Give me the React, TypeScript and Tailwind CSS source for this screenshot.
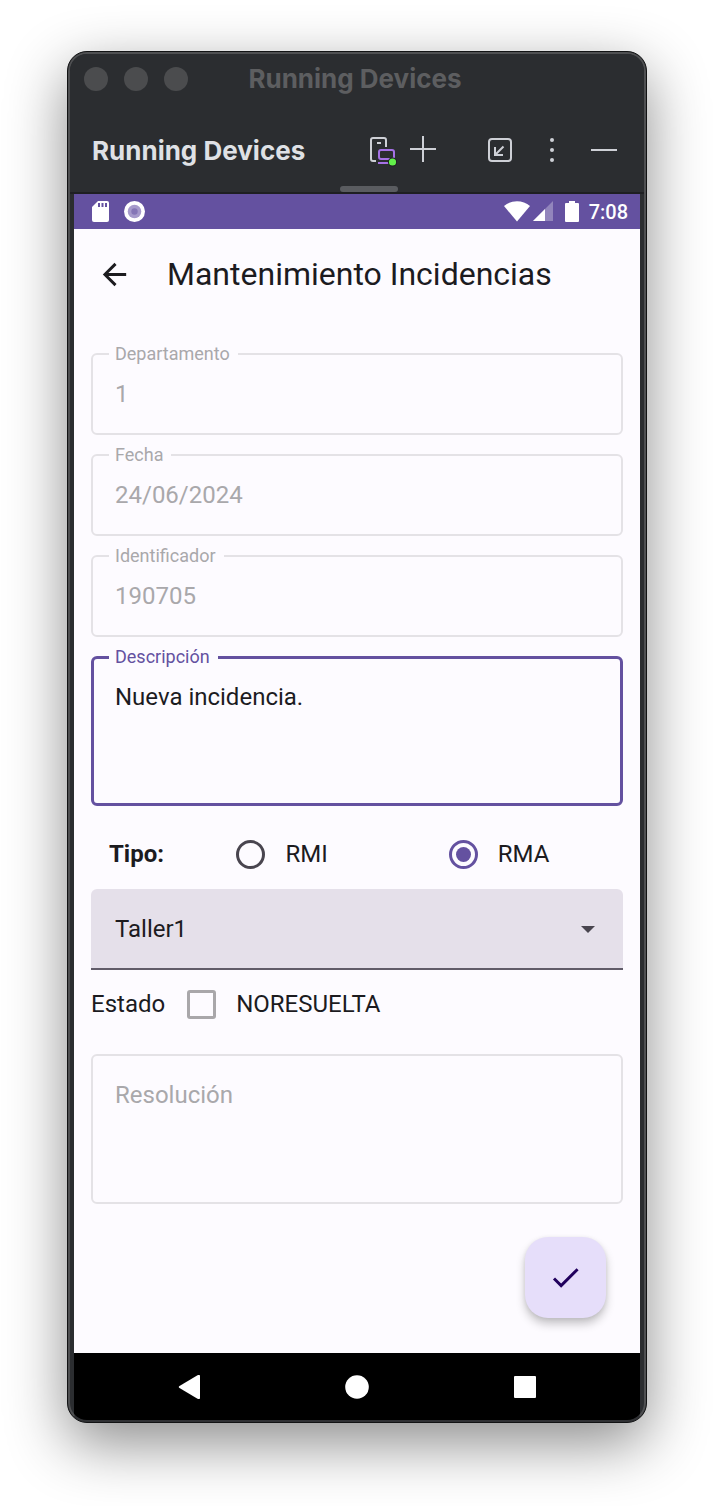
import { useState } from 'react';
import type { ReactNode } from 'react';

const FIELD_TEXT = 'block w-full resize-none bg-transparent px-1.5 text-[24px] leading-8 outline-none';

function ToolButton({ label, children }: { label: string; children: ReactNode }) {
  return (
    <button type="button" aria-label={label} className="flex shrink-0 items-center justify-center text-[#ced0d6]">
      {children}
    </button>
  );
}

function WindowHeader() {
  return (
    <header className="border-b-2 border-[#1e1f22] bg-[#2b2d30] font-['Inter',sans-serif] text-[26px] leading-8 font-bold">
      <div className="grid grid-cols-[1fr_auto_1fr] items-center py-[9px] pr-[18px] pl-3.5">
        <div className="flex gap-4">
          <span className="size-6 rounded-full bg-[#4b4c4e]" />
          <span className="size-6 rounded-full bg-[#4b4c4e]" />
          <span className="size-6 rounded-full bg-[#4b4c4e]" />
        </div>
        <span className="whitespace-nowrap text-[#5d5e60]">Running Devices</span>
      </div>
      <div className="flex items-center pt-[31px] pr-[27px] pb-[19px] pl-[22px]">
        <h1 className="grow whitespace-nowrap text-[#dfe1e5]">Running Devices</h1>
        <div className="flex items-center">
          <div className="flex items-center gap-[13px] pr-[51px]">
            <ToolButton label="Device mirroring">
              <svg width="28" height="32" viewBox="0 0 28 32" fill="none" strokeWidth="2">
                <path d="M7 26H4a2 2 0 0 1-2-2V5a2 2 0 0 1 2-2h11a2 2 0 0 1 2 2v7" stroke="currentColor" />
                <path d="M8 8h4" stroke="currentColor" />
                <rect x="10" y="15" width="15" height="9" rx="2" stroke="#a571e6" />
                <path d="M9 28h11" stroke="#a571e6" />
                <circle cx="23.500" cy="27" r="4.600" fill="#1e1f22" />
                <circle cx="23.500" cy="27" r="3.600" fill="#62f04a" />
              </svg>
            </ToolButton>
            <ToolButton label="Add device">
              <svg width="26" height="32" viewBox="0 0 26 32" fill="none" stroke="currentColor" strokeWidth="2">
                <path d="M0 14h26M13 1v26" />
              </svg>
            </ToolButton>
          </div>
          <div className="flex items-center gap-[35px]">
            <ToolButton label="Dock window">
              <svg width="26" height="32" viewBox="0 0 26 32" fill="none" stroke="currentColor" strokeWidth="2">
                <rect x="2" y="4" width="22" height="22" rx="3" />
                <path d="M16.500 11.500 8.500 19.500M8 12v8h8" />
              </svg>
            </ToolButton>
            <ToolButton label="More options">
              <svg width="8" height="32" viewBox="0 0 8 32" fill="currentColor">
                <circle cx="4" cy="5" r="2" />
                <circle cx="4" cy="15" r="2" />
                <circle cx="4" cy="25" r="2" />
              </svg>
            </ToolButton>
            <ToolButton label="Hide">
              <svg width="26" height="32" viewBox="0 0 26 32" fill="none" stroke="currentColor" strokeWidth="2">
                <path d="M0 15h26" />
              </svg>
            </ToolButton>
          </div>
        </div>
      </div>
      <div className="flex justify-center pl-6">
        <span className="h-1.5 w-[58px] rounded-full bg-[#5a5c60]" />
      </div>
    </header>
  );
}

function StatusBar() {
  return (
    <div className="flex h-[35px] items-center justify-between bg-[#6451a0] pr-3 pl-[18px] text-white">
      <div className="flex items-center gap-[15px]">
        <svg width="17" height="21" viewBox="0 0 17 21">
          <path d="M6 0h9a2 2 0 0 1 2 2v17a2 2 0 0 1-2 2H2a2 2 0 0 1-2-2V6z" fill="currentColor" />
          <path d="M7 2v4M10.500 2v4M14 2v4" stroke="#6451a0" strokeWidth="2" />
        </svg>
        <svg width="21" height="21" viewBox="0 0 21 21">
          <circle cx="10.500" cy="10.500" r="10.500" fill="currentColor" />
          <circle cx="10.500" cy="10.500" r="6.800" fill="#a69acb" />
          <circle cx="10.500" cy="10.500" r="3.200" fill="#8576b6" />
        </svg>
      </div>
      <div className="flex items-center">
        <svg width="26" height="21" viewBox="0 0 26 21" fill="currentColor">
          <path d="M13 20.500 0 5C7-1.300 19-1.300 26 5z" />
        </svg>
        <svg className="ml-[3px]" width="20" height="21" viewBox="0 0 20 21" fill="currentColor">
          <path d="M20 0v20H0z" opacity=".3" />
          <path d="M12 8v12H0z" />
        </svg>
        <svg className="ml-3" width="14" height="21" viewBox="0 0 14 21" fill="currentColor">
          <path d="M4 0h6v2h3a1 1 0 0 1 1 1v17a1 1 0 0 1-1 1H1a1 1 0 0 1-1-1V3a1 1 0 0 1 1-1h3z" />
        </svg>
        <span className="ml-2.5 text-[20px] leading-6 font-medium">7:08</span>
      </div>
    </div>
  );
}

function DisabledField({ id, label, value }: { id: string; label: string; value: string }) {
  return (
    <fieldset className="min-w-0 rounded-md border-2 border-[#e4e2e6] px-4 pt-3.5 pb-[23px] text-[#a9a8ab]">
      <legend className="pr-2 pl-1.5 text-[18px] leading-5">
        <label htmlFor={id}>{label}</label>
      </legend>
      <input id={id} disabled defaultValue={value} className={FIELD_TEXT} />
    </fieldset>
  );
}

function RadioOption({ label, checked, onSelect }: { label: string; checked: boolean; onSelect: () => void }) {
  return (
    <label className="flex items-center gap-5">
      <input
        type="radio"
        name="tipo"
        checked={checked}
        onChange={onSelect}
        className="grid size-[29px] appearance-none place-items-center rounded-full border-3 border-[#49454f] before:size-[15px] before:rounded-full checked:border-[#6451a0] checked:before:bg-[#6451a0]"
      />
      {label}
    </label>
  );
}

function IncidentForm() {
  const [tipo, setTipo] = useState('RMA');
  return (
    <form className="flex grow flex-col px-[17px] pb-[35px] text-[24px] leading-8 text-[#1c1b1f]" onSubmit={(e) => e.preventDefault()}>
      <div className="flex flex-col gap-2.5">
        <DisabledField id="departamento" label="Departamento" value="1" />
        <DisabledField id="fecha" label="Fecha" value="24/06/2024" />
        <DisabledField id="identificador" label="Identificador" value="190705" />
        <fieldset className="min-w-0 rounded-md border-3 border-[#6451a0] px-[15px] pt-3.5 pb-2.5">
          <legend className="pr-2 pl-1.5 text-[18px] leading-5 text-[#6451a0]">
            <label htmlFor="descripcion">Descripción</label>
          </legend>
          <textarea id="descripcion" rows={3} defaultValue="Nueva incidencia." className={`${FIELD_TEXT} h-28`} />
        </fieldset>
      </div>

      <div
        role="radiogroup"
        aria-labelledby="tipo-label"
        className="grid grid-cols-[30fr_50fr_41fr] items-center pt-8 pb-[19px] pl-[18px]"
      >
        <span id="tipo-label" className="font-bold">Tipo:</span>
        <RadioOption label="RMI" checked={tipo === 'RMI'} onSelect={() => setTipo('RMI')} />
        <RadioOption label="RMA" checked={tipo === 'RMA'} onSelect={() => setTipo('RMA')} />
      </div>

      <div className="grid items-center">
        <select
          aria-label="Taller"
          className="col-start-1 row-start-1 h-[81px] w-full appearance-none rounded-t-md border-b-2 border-[#615c69] bg-[#e5e0ea] pr-16 pl-6 outline-none"
        >
          <option>Taller1</option>
        </select>
        <svg className="pointer-events-none col-start-1 row-start-1 mr-7 justify-self-end" width="14" height="7" viewBox="0 0 14 7">
          <path d="M0 0h14L7 7z" fill="#49454f" />
        </svg>
      </div>

      <div className="flex items-center gap-[22px] pt-[18px]">
        <span>Estado</span>
        <label className="flex items-center gap-5">
          <input type="checkbox" className="size-[29px] appearance-none rounded-[3px] border-3 border-[#a9a7aa] checked:bg-[#6451a0]" />
          NORESUELTA
        </label>
      </div>

      <textarea
        aria-label="Resolución"
        disabled
        placeholder="Resolución"
        className="mt-[34px] block h-[150px] w-full resize-none rounded-md border-2 border-[#e4e2e6] px-[22px] py-[23px] leading-8 placeholder:text-[#a9a8ab]"
      />

      <button
        type="submit"
        aria-label="Guardar"
        className="mt-[33px] mr-[17px] flex size-[81px] items-center justify-center self-end rounded-[23px] bg-[#e6defa] text-[#21005d] shadow-[0_6px_10px_rgba(0,0,0,0.22),0_1px_4px_rgba(0,0,0,0.08)]"
      >
        <svg width="35" height="35" viewBox="0 0 24 24" fill="currentColor">
          <path d="M9 16.170 4.830 12l-1.420 1.410L9 19 21 7l-1.410-1.410z" />
        </svg>
      </button>
    </form>
  );
}

function NavigationBar() {
  return (
    <nav className="flex h-[67px] items-center justify-center gap-36 bg-black text-white">
      <button type="button" aria-label="Atrás">
        <svg width="24" height="24" viewBox="0 0 24 24" fill="currentColor">
          <path d="M2.500 11Q1 12 2.500 13L20.500 23.800Q23 24.600 23 23V1Q23-.600 20.500 .200z" />
        </svg>
      </button>
      <button type="button" aria-label="Inicio">
        <svg width="24" height="24" viewBox="0 0 24 24" fill="currentColor">
          <circle cx="12" cy="12" r="11.800" />
        </svg>
      </button>
      <button type="button" aria-label="Recientes">
        <svg width="24" height="24" viewBox="0 0 24 24" fill="currentColor">
          <rect x="1" y="1" width="22" height="22" rx="1" />
        </svg>
      </button>
    </nav>
  );
}

export default function App() {
  return (
    <div className="min-h-screen bg-white px-[67px] pt-[51px] pb-[83px]">
      <main className="overflow-hidden rounded-[20px] border border-[#121314] bg-[#2b2d30] shadow-[0_20px_60px_rgba(0,0,0,0.46)]">
        <div className="overflow-hidden rounded-[19px] border-2 border-[#4f5052] border-b-[#303134] bg-[#2b2d30]">
          <WindowHeader />
          <div className="px-1 font-['Roboto',sans-serif]">
            <StatusBar />
            <div className="bg-[#fdfbff]">
              <div className="flex items-center gap-[35px] px-[23px] pt-[25px] pb-[50px] text-[#1c1b1f]">
                <button type="button" aria-label="Volver">
                  <svg width="35" height="35" viewBox="0 0 24 24" fill="currentColor">
                    <path d="M20 11H7.830l5.590-5.590L12 4l-8 8 8 8 1.410-1.410L7.830 13H20z" />
                  </svg>
                </button>
                <h2 className="text-[32px] leading-10">Mantenimiento Incidencias</h2>
              </div>
              <IncidentForm />
            </div>
            <NavigationBar />
          </div>
        </div>
      </main>
    </div>
  );
}
